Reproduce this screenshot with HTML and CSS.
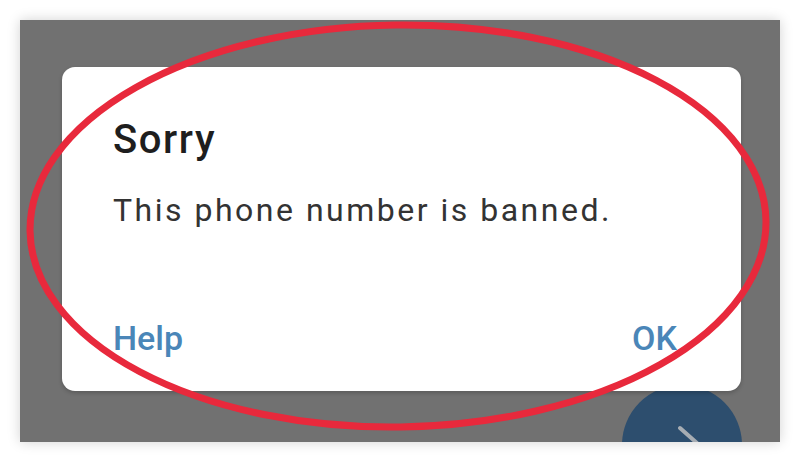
FILE: index.html
```html
<!DOCTYPE html>
<html>
<head>
<meta charset="utf-8">
<link rel="stylesheet" href="styles.css">
</head>
<body>
<div class="page">
  <div class="panel">
    <div class="fab">
      <svg class="fab-arrow" viewBox="0 0 120 120" width="120" height="120">
        <path d="M58 43 L76 59 M76 59 L40 59" stroke="#a7adb3" stroke-width="4" fill="none" stroke-linecap="round"/>
      </svg>
    </div>
    <div class="dialog">
      <h1 class="title">Sorry</h1>
      <p class="message">This phone number is banned.</p>
      <div class="actions">
        <span class="btn">Help</span>
        <span class="btn">OK</span>
      </div>
    </div>
  </div>
  <svg class="mark" width="800" height="462" viewBox="0 0 800 462">
    <ellipse cx="398" cy="226" rx="368" ry="201" fill="none" stroke="#e8293c" stroke-width="7" transform="rotate(-0.8 398 226)"/>
  </svg>
</div>
</body>
</html>
```
FILE: styles.css
```css
html, body {
  margin: 0;
  padding: 0;
  background: #ffffff;
}
.page {
  position: relative;
  width: 800px;
  height: 462px;
  overflow: hidden;
  background: #ffffff;
  padding: 20px;
  box-sizing: border-box;
}
.panel {
  position: relative;
  width: 760px;
  height: 422px;
  background: #717171;
  box-shadow: 0 0 12px rgba(0,0,0,0.18);
  padding: 47px 0 0 42px;
  box-sizing: border-box;
  overflow: hidden;
}
.dialog {
  position: relative;
  width: 679px;
  height: 324px;
  background: #ffffff;
  border-radius: 13px;
  box-shadow: 0 2px 4px rgba(0,0,0,0.2);
  box-sizing: border-box;
  padding: 50px 64px 0 51px;
  display: flex;
  flex-direction: column;
  font-family: Roboto, "Liberation Sans", sans-serif;
}
.title {
  margin: 0;
  font-size: 40px;
  line-height: 46px;
  font-weight: 500;
  color: #1e1e1e;
  letter-spacing: 1.6px;
}
.message {
  margin: 29px 0 0 0;
  font-size: 32px;
  line-height: 36px;
  font-weight: 400;
  color: #333333;
  letter-spacing: 2.5px;
}
.actions {
  margin-top: auto;
  margin-bottom: 34px;
  display: flex;
  justify-content: space-between;
}
.btn {
  font-size: 34px;
  line-height: 38px;
  font-weight: 500;
  color: #4a86b8;
}
.fab {
  position: absolute;
  left: 602px;
  top: 365px;
  width: 120px;
  height: 120px;
  border-radius: 50%;
  background: #2d4e6e;
}
.fab-arrow {
  display: block;
}
.mark {
  position: absolute;
  left: 0;
  top: 0;
  pointer-events: none;
}
```
